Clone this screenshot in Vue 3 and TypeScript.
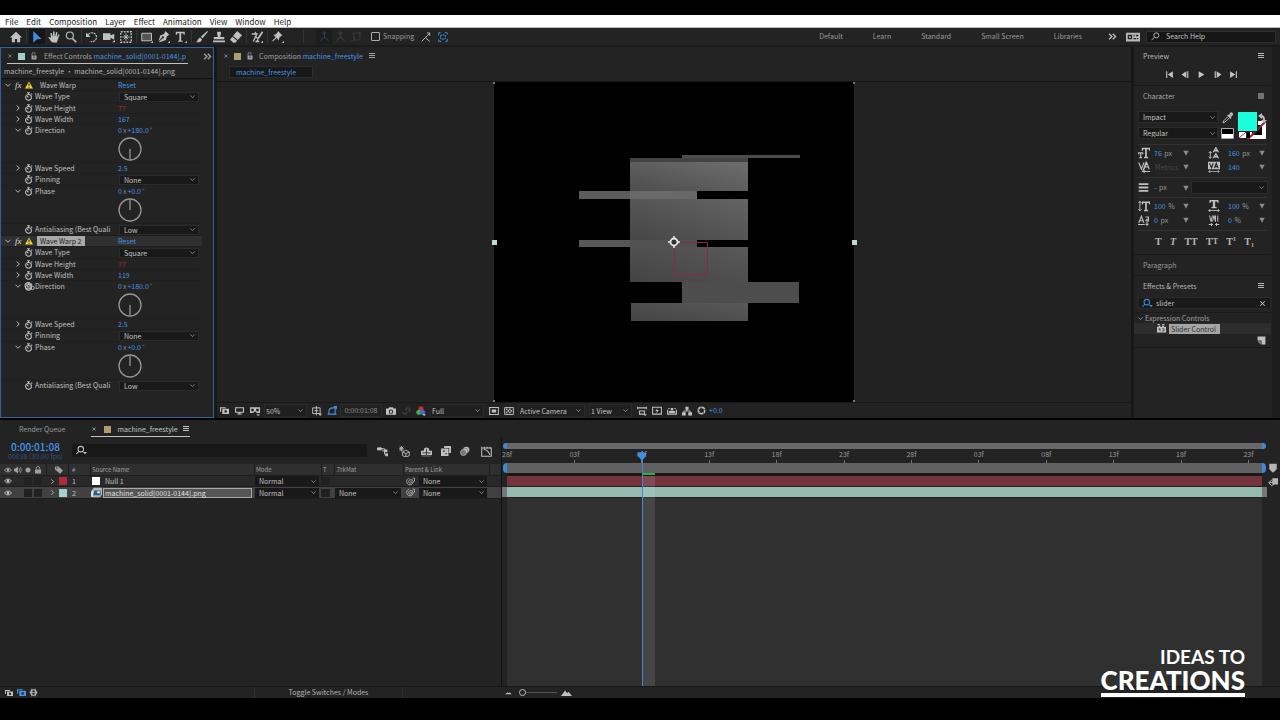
<script setup lang="ts">
import { h, type FunctionalComponent } from 'vue'

const glyphs: Record<string, string> = {
  home: '<path fill="currentColor" d="M8 1 0 8.500h2.500V15h4v-4.500h3V15h4V8.500H16z"/>',
  arrow: '<path fill="currentColor" d="M3 0 14 10.500 8 11 3 15.500z"/>',
  hand: '<path fill="currentColor" d="M5 15C3 12 1.500 10 .7 8.500c.8-1 2-.6 3 .7L4 9 3.200 3c.2-1.200 1.600-1 1.900 0l.9 4 .5-.1L6.800 1c.4-1.200 1.900-1 2 0l.1 5.900h.5L10.700 2c.5-1.100 1.800-.7 1.800.4l-.8 5.200.5.200 1.500-3.200c.7-.8 1.800-.3 1.500.8L13 12l-1.500 3.500z"/>',
  zoom: '<g fill="none" stroke="currentColor"><circle cx="6.500" cy="6" r="4.700" stroke-width="1.500"/><path d="m10 10 5 5" stroke-width="2.300"/></g>',
  rotate: '<path d="M3 5a6 6 0 1 1 3 9" fill="none" stroke="currentColor" stroke-width="1.600" stroke-dasharray="3 1"/><path fill="currentColor" d="M0 2v6h6z"/>',
  camera: '<path fill="currentColor" d="M0 3h10v3l5-2.500v8L10 9v3H0zM12 15h4v-3z"/>',
  anchor: '<rect x="1" y="1" width="14" height="14" fill="none" stroke="currentColor" stroke-width="1.800" stroke-dasharray="2.500 1.500"/><path d="M8 3v10M3 8h10M5 5l6 6M11 5l-6 6" stroke="currentColor" stroke-width="1.200"/>',
  rect: '<path d="M1 3h13v10H1z" fill="#555" stroke="currentColor" stroke-width="1.300"/><path fill="currentColor" d="M13 16h3v-3z"/>',
  pen: '<path fill="currentColor" d="m10 0 5 5-3 2-1.500 5L2 15l-.6-.6L6 10a1.500 1.500 0 1 0-1-1L.7 13.500 3 6l5-2zM13 16h3v-3z"/>',
  type: '<path fill="currentColor" d="M1 1h12v4h-1.500L11 3H8.200v9.500l2 .5v1.200H4V13l1.800-.5V3H3l-.5 2H1zM13 16h3v-3z"/>',
  brush: '<path fill="currentColor" d="M15 0 6.500 7.500l2.300 2.300L16 1zM5.500 8.500 8 11c-1 4-4 4.500-8 4 2-1 2-5 5.500-6.500z"/>',
  stamp: '<path fill="currentColor" d="M5.500 1h5v3L9.500 8H15v3H1V8h5.500l-1-4zM0 12.500h16V15H0z"/>',
  eraser: '<path fill="currentColor" d="M9.500 0 16 5.500 10.500 12 4 6.500zM3 7.500 9.500 13 7 15.500H4.500L0 11.500z"/>',
  roto: '<g fill="none" stroke="currentColor" stroke-width="1.700"><path d="M1 4h7L3 14M5 7l4 3M6 4V1"/><path d="m15.500 1-6 9" stroke-width="2.400"/><path d="M9 10c1 3-2 4-3 4h5"/></g><path fill="currentColor" d="M13 16h3v-3z"/>',
  pin: '<path fill="currentColor" d="m8 0 6 6-2 .8-2.500 2.500-.2 3.200L6 9.200 1.200 14l-1-1L5 8.200 1.700 5l3.200-.2L7.300 2zM13 16h3v-3z"/>',
  axis: '<path d="M8 1v8M8 9l-6 5M8 9l6 5M5 4l3-3 3 3" fill="none" stroke="currentColor" stroke-width="1.600"/>',
  axisBox: '<path d="M3 3h10v10H5zM1 14l4-1V9M12 1l2 2-2 2" fill="none" stroke="currentColor" stroke-width="1.500"/>',
  snapEdge: '<path d="m1 15 6-6 7 6M7 9l7-7M9.500 1.500H14V6" fill="none" stroke="currentColor" stroke-width="1.500"/>',
  snapGrid: '<path d="M1 5V1h4M11 1h4v4M15 11v4h-4M5 15H1v-4M4 6l4-2 4 2v4l-4 2-4-2z" fill="none" stroke="currentColor" stroke-width="1.700" stroke-dasharray="3 1"/>',
  more: '<path d="m2 3 5 5-5 5M8.500 3l5 5-5 5" fill="none" stroke="currentColor" stroke-width="2.300"/>',
  workspace: '<path fill="currentColor" fill-rule="evenodd" d="M0 3h16v10H0zm2 2.500v5h5v-5zm1.500 1.500h2v2h-2zM8.500 5.500V7H10V5.500zm3 0V7H14V5.500zm-3 3.500v1.500h3V9zm4 0v1.500H14V9z"/>',
  search: '<g fill="none" stroke="currentColor" stroke-width="1.600"><circle cx="9.500" cy="6" r="4.500"/><path d="M6 9.500 1 14.500"/></g>',
  searchMenu: '<g fill="none" stroke="currentColor" stroke-width="1.500"><circle cx="7" cy="6" r="4"/><path d="M4.500 9 .5 13"/></g><path fill="currentColor" d="M10 10h6l-3 3.500z"/>',
  lock: '<path fill="currentColor" fill-rule="evenodd" d="M3 7h10v8H3zm4 2v3h2V9z"/><path d="M4 7V4a3 3 0 0 1 6-.5V5" fill="none" stroke="currentColor" stroke-width="1.600"/>',
  padlock: '<path fill="currentColor" d="M2 7h12v8H2z"/><path d="M4.500 7V4.500a3.500 3.500 0 0 1 7 0V7" fill="none" stroke="currentColor" stroke-width="1.800"/>',
  menu: '<path fill="currentColor" d="M2 2h12v2H2zM2 6h12v2H2zM2 10h12v2H2z"/>',
  block: '<path fill="currentColor" opacity=".6" d="M2 2h12v12H2z"/>',
  close: '<path d="m4 4 8 8M12 4l-8 8" stroke="currentColor" stroke-width="1.800"/>',
  down: '<path d="m3 5.500 5 5 5-5" fill="none" stroke="currentColor" stroke-width="1.800"/>',
  right: '<path d="m5.500 3 5 5-5 5" fill="none" stroke="currentColor" stroke-width="2"/>',
  tri: '<path fill="currentColor" d="M1 2h14L8 15z"/>',
  watch: '<circle cx="8" cy="9.500" r="5.200" fill="none" stroke="currentColor" stroke-width="1.800"/><path d="M5.500 1.500h5M8 1.500v3M13 3l1.500 1.500M8 9.500 5.500 7" fill="none" stroke="currentColor" stroke-width="1.800"/>',
  warn: '<path fill="#f3d22b" d="M8 1 16 15H0z"/><path d="M8 5v5M8 11.500v2" stroke="#222" stroke-width="2"/>',
  whip: '<path d="M8 8c0-2 3-1 2.500 1.200C10 12 5 12 4.700 8.500 4.500 4 11.500 3 12.800 7.500 13.500 13 8 15 4.500 13.500 0 11 .5 4 5 2M12 2h3v6" fill="none" stroke="currentColor" stroke-width="1.400"/>',
  grab: '<circle cx="6" cy="7" r="4.500" fill="none" stroke="currentColor" stroke-width="1.500"/><path d="m2 3 9 9M3 13l7-9" stroke="currentColor"/><circle cx="12.500" cy="10" r="2.500" fill="none" stroke="currentColor" stroke-width="1.400"/>',
  layers: '<path fill="currentColor" d="M0 2h10v2H2v6H0z"/><path fill="currentColor" fill-rule="evenodd" d="M4 5h12v9H4zm4 2.500v4h4v-4z"/>',
  monitor: '<path fill="currentColor" fill-rule="evenodd" d="M0 2h16v10H9.500v1.500H12V15H4v-1.500h2.500V12H0zm2 2v6h12V4z"/>',
  goggles: '<path fill="currentColor" fill-rule="evenodd" d="M0 2h16v9h-5L8 8.500 5 11H0zm2 2.500v4h4v-4zm8 0v4h4v-4zM10 13h6l-3 3z"/>',
  grid: '<path d="M1 3h12v9H1zM7 0v15M4 7.500h6" fill="none" stroke="currentColor" stroke-width="1.500"/><path fill="currentColor" d="M10 12h6l-3 4z"/>',
  mask: '<path d="M3 13V8q1-5 6-5h4v10zM1 13h14M11 1h4v4" fill="none" stroke="currentColor" stroke-width="1.700"/>',
  photo: '<path fill="currentColor" fill-rule="evenodd" d="M0 4h4l1-2h6l1 2h4v10H0zm8 1.500a3.500 3.500 0 1 0 0 7 3.500 3.500 0 0 0 0-7zM8 7a2 2 0 1 1 0 4 2 2 0 0 1 0-4z"/>',
  link: '<path d="M3 9a3 3 0 0 0 5 3l2-2M7 7l2-3a3 3 0 0 1 5 3l-2 2" fill="none" stroke="currentColor" stroke-width="2"/>',
  rgb: '<circle cx="8" cy="4.500" r="4" fill="#d52c32"/><circle cx="4.500" cy="10" r="4" fill="#37b94a"/><circle cx="10.500" cy="10" r="4" fill="#4b63e0"/><path fill="#ccc" d="M10 13h6l-3 3z"/>',
  roi: '<path d="M1 2.500h14v11H1z" fill="none" stroke="currentColor" stroke-width="1.700"/><path fill="currentColor" d="M4.500 5.500h7v5h-7z"/>',
  checker: '<path d="M1 2.500h14v11H1z" fill="none" stroke="currentColor" stroke-width="1.500"/><path fill="currentColor" d="M3 4h2.500v2.500H3zm5 0h2.500v2.500H8zM5.500 6.500H8V9H5.500zm5 0H13V9h-2.500zM3 9h2.500v2.500H3zm5 0h2.500v2.500H8z"/>',
  align: '<path d="M1 3h14M1 1v4M15 1v4M4 8h8v5H4z" fill="none" stroke="currentColor" stroke-width="1.700"/><path fill="currentColor" d="M10 13h6l-3 3z"/>',
  fast: '<path d="M1 2h14v11H1z" fill="none" stroke="currentColor" stroke-width="1.700"/><path fill="currentColor" d="M9 3 5 8.500h3L7 12l4-5.500H8z"/>',
  timeline: '<path d="M1 6v7h14V6" fill="none" stroke="currentColor" stroke-width="1.800"/><path fill="currentColor" d="M3 8h10v3H3zM6 3h4v4H6zM2 3h2v2H2zm10 0h2v2h-2z"/>',
  flow: '<path d="M8 5v3M3 11V8h10v3" fill="none" stroke="currentColor" stroke-width="1.500"/><path fill="currentColor" d="M5.500 1h5v5h-5zM0 10h6v5H0zm10 0h6v5h-6z"/>',
  aperture: '<circle cx="8" cy="8" r="5.500" fill="none" stroke="currentColor" stroke-width="3"/><path d="M8 0 5 8M16 7l-8-2M12 15l-1-8M2 13l8-3M1 4l5 6" stroke="#222" stroke-width="1"/>',
  first: '<path fill="currentColor" d="M2 2h2v12H2zM14 2v12L5 8z"/>',
  prev: '<path fill="currentColor" d="M11 2h2v12h-2zM9.500 2v12L1 8z"/>',
  play: '<path fill="currentColor" d="M3 2v12l10-6z"/>',
  next: '<path fill="currentColor" d="M3 2h2v12H3zM6.500 2v12L15 8z"/>',
  last: '<path fill="currentColor" d="M12 2h2v12h-2zM2 2v12l9-6z"/>',
  fontSize: '<path fill="currentColor" d="M5 1h11v4h-1.200l-.5-2h-2.500v10l1.700.4V15H8v-1.600l1.500-.4V3H7l-.5 2H5zM0 7h7v3H6l-.4-1.500H4.300V13l1 .4V15H1.800v-1.600l1-.4V8.500H1.300L1 10H0z"/>',
  leading: '<path d="M3 6v9M1 8l2-2 2 2M1 13l2 2 2-2" fill="none" stroke="currentColor" stroke-width="1.300"/><path d="m7 7 3.500-6L14 7M8 5h5M7 15l3.500-6 3.500 6M8 13h5" fill="none" stroke="currentColor" stroke-width="1.700"/>',
  kerning: '<path d="m1 2 3.500 9L8 2M8 11l3.500-9L15 11M9 8h5M6 15 11 1M7 14h9" fill="none" stroke="currentColor" stroke-width="1.500"/><path fill="currentColor" d="M9 11.500v5L6 14z"/>',
  tracking: '<path fill="currentColor" d="M0 1h16v10H0z"/><path d="m2 3 2.700 6L7 3M8.500 9.500 11 3l2.500 6.500M9.500 7.500h3" fill="none" stroke="#222" stroke-width="1.500"/><path d="M1 14h14M3 12l-2 2 2 2M13 12l2 2-2 2" fill="none" stroke="currentColor"/>',
  stroke: '<path d="M1 3h14M1 8h14M1 13h14" stroke="currentColor" stroke-width="2.600"/>',
  vScale: '<path fill="currentColor" d="M5 2h11v4h-1.200l-.5-2h-2.500v9l1.700.4V15H8v-1.600l1.500-.4V4H7l-.5 2H5z"/><path d="M2.500 2v12M.5 4l2-2.500 2 2.500M.5 12l2 2.500 2-2.500" fill="none" stroke="currentColor" stroke-width="1.200"/>',
  hScale: '<path fill="currentColor" d="M2 0h12v4h-1.300l-.5-2H9.500v7l2 .4V11h-7V9.400l2-.4V2H3.800l-.5 2H2z"/><path d="M1 14h14M3 12l-2 2 2 2M13 12l2 2-2 2" fill="none" stroke="currentColor" stroke-width="1.200"/>',
  baseline: '<path d="m1 12 3.500-9L8 12M2 9h5M0 14h9M12 7v8M10 9l2-2 2 2M10 13l2 2 2-2M10 4h4v6" fill="none" stroke="currentColor" stroke-width="1.400"/>',
  tsume: '<path d="m2 2 2 8 2-8M6 10l2-8 2 8M10 2v8M13 2v8M1 14h5M15 14h-5M4 12l2 2-2 2M12 12l-2 2 2 2" fill="none" stroke="currentColor" stroke-width="1.300"/>',
  preset: '<path fill="currentColor" fill-rule="evenodd" d="M0 5h3V3h3v2h3V3h3v2h4v10H0zm3 3v2h2v3h1V8zm6 0v1h3v1h-2v1h2v1H9v1h4V8zM1 0h4v2H1zm8 0h4v2H9z"/>',
  page: '<path fill="currentColor" d="M1 1h14v14H8V8H1z"/><path fill="currentColor" d="M1 9.500h5.500V15z" opacity=".7"/>',
  eye: '<path d="M1 8q7-8 14 0-7 8-14 0z" fill="none" stroke="currentColor" stroke-width="1.800"/><circle cx="8" cy="8" r="2.800" fill="currentColor"/>',
  speaker: '<path fill="currentColor" d="M0 5h3l5-4v14l-5-4H0z"/><path d="M10 4q3 4 0 8M12.500 2q5 6 0 12" fill="none" stroke="currentColor" stroke-width="1.500"/>',
  dot: '<circle cx="8" cy="8" r="5" fill="currentColor"/>',
  tag: '<path fill="currentColor" fill-rule="evenodd" d="M0 1h7l9 8-6 6.500L0 7zm3.500 1.500a1.500 1.500 0 1 0 0 3 1.500 1.500 0 0 0 0-3z"/>',
  footage: '<path fill="#b7b7b7" d="M4 1h12v10l-3 4H1V5z"/><path fill="#27618e" d="M5 5h9v7H3z"/><path fill="#e0e0e0" d="M0 6h3v8H0zM9 6h4v3H9z"/>',
  network: '<path d="M1 4h6M7 4h4v8h4M7 7h8" fill="none" stroke="currentColor" stroke-width="1.400"/><path fill="currentColor" d="M0 2h5v4H0zm11 3h4v4h-4zm1 6h4v4h-4zM4 1l5 3-5 3z"/>',
  draft: '<path d="m5 9 5-3 5 3v5l-5 2-5-2zM5 9l5 2 5-2M10 11v5M0 4h7M3.500 0v8M1 1l5 6M6 1 1 7" fill="none" stroke="currentColor" stroke-width="1.300"/>',
  shy: '<path fill="currentColor" d="M4 7q0-5 4-5t4 5h4v6H0V7zm-3 7h14v1H1z"/><path d="M2 10h12M8 4v9" stroke="#222" stroke-width="1.200"/>',
  blend: '<path fill="currentColor" d="M5 0h11v11h-3V3H5z"/><path fill="currentColor" fill-rule="evenodd" d="M0 4h12v12H0zm3 3v2h3V7zm4 4v2h2v-2z"/>',
  blur: '<circle cx="10" cy="6" r="5" fill="currentColor"/><circle cx="7.500" cy="8.500" r="5.300" fill="none" stroke="#555" stroke-width="1"/><circle cx="5.500" cy="10.500" r="4.800" fill="#777" stroke="currentColor"/>',
  graph: '<path d="M1 3h14v12H1zM4 5q6 0 9 8M1 1v3M5 1v3M9 1v3M13 1v3" fill="none" stroke="currentColor" stroke-width="1.500"/>',
  marker: '<path fill="currentColor" d="M2 1h12v9l-6 5.500L2 10z"/>',
  button: '<path fill="currentColor" d="M7 2h9v10H7z"/><path d="M7 4 1 9l5 5 4-3-3-5M2 9h8" fill="none" stroke="currentColor" stroke-width="1.600"/>',
  mtnSmall: '<path fill="currentColor" d="m2 11 4-3 2 1 2-1 4 3z"/>',
  mtnBig: '<path fill="currentColor" d="m0 13 6-8 3 4 2-2 5 6z"/>',
  cog: '<circle cx="8" cy="8" r="5" fill="none" stroke="currentColor" stroke-width="1.800"/><path d="M5 1v14M11 1v14M1 8h14" stroke="currentColor" stroke-width="1.300"/>',
}

const Icon: FunctionalComponent<{ name: string; size?: number }> = (p) =>
  h('svg', { viewBox: '0 0 16 16', width: p.size ?? 11, height: p.size ?? 11, 'aria-hidden': 'true', innerHTML: glyphs[p.name] })
Icon.props = ['name', 'size']

const menus = ['File', 'Edit', 'Composition', 'Layer', 'Effect', 'Animation', 'View', 'Window', 'Help']
const tools = [['home'], ['arrow', 'hand', 'zoom'], ['rotate', 'camera', 'anchor'], ['rect', 'pen', 'type'], ['brush', 'stamp', 'eraser'], ['roto'], ['pin']]
const workspaces = ['Default', 'Learn', 'Standard', 'Small Screen', 'Libraries']

interface Prop { label: string; kind: 'select' | 'number' | 'angle'; value: string; arrow?: string; red?: boolean; cursor?: boolean }
const effect = (name: string, width: string, selected: boolean) => ({
  name,
  selected,
  props: [
    { label: 'Wave Type', kind: 'select', value: 'Square' },
    { label: 'Wave Height', kind: 'number', value: '77', arrow: 'right', red: true },
    { label: 'Wave Width', kind: 'number', value: width, arrow: 'right' },
    { label: 'Direction', kind: 'angle', value: '+180.0', arrow: 'down', cursor: selected },
    { label: 'Wave Speed', kind: 'number', value: '2.5', arrow: 'right' },
    { label: 'Pinning', kind: 'select', value: 'None' },
    { label: 'Phase', kind: 'angle', value: '+0.0', arrow: 'down' },
    { label: 'Antialiasing (Best Quali', kind: 'select', value: 'Low' },
  ] as Prop[],
})
const effects = [effect('Wave Warp', '167', false), effect('Wave Warp 2', '119', true)]

const charRows = [
  [
    { icon: 'fontSize', v: '76', u: 'px' }, { icon: 'leading', v: '160', u: 'px' },
    { icon: 'kerning', v: '', u: 'Metrics' }, { icon: 'tracking', v: '140', u: '' },
  ],
  [
    { icon: 'vScale', v: '100', u: '%' }, { icon: 'hScale', v: '100', u: '%' },
    { icon: 'baseline', v: '0', u: 'px' }, { icon: 'tsume', v: '0', u: '%' },
  ],
]

const layers = [
  { n: 1, name: 'Null 1', color: 'red', trk: false, sel: false },
  { n: 2, name: 'machine_solid[0001-0144].png', color: 'teal', trk: true, sel: true },
]

const span = 756
const ticks = ['28f', '03f', '08f', '13f', '18f', '23f', '28f', '03f', '08f', '13f', '18f', '23f'].map((label, i) => ({
  label,
  left: `${((i * 67.5) / span) * 100}%`,
}))
const playhead = `${(135 / span) * 100}%`
</script>

<template>
  <div class="app">
    <nav class="menubar"><button v-for="m in menus" :key="m">{{ m }}</button></nav>

    <header class="toolbar">
      <div v-for="(g, i) in tools" :key="i" class="tools">
        <button v-for="t in g" :key="t" :aria-label="t" :class="{ on: t === 'arrow' }"><Icon :name="t" :size="12" /></button>
      </div>
      <div class="tools axes">
        <button aria-label="Local axis" class="sunk"><Icon name="axis" /></button>
        <button aria-label="World axis"><Icon name="axis" /></button>
        <button aria-label="View axis"><Icon name="axisBox" /></button>
      </div>
      <label class="snap"><input type="checkbox" />Snapping</label>
      <div class="tools snaps">
        <button aria-label="Snap edges"><Icon name="snapEdge" :size="10" /></button>
        <button aria-label="Snap grid" class="blue"><Icon name="snapGrid" :size="10" /></button>
      </div>
      <div class="spaces">
        <button v-for="w in workspaces" :key="w">{{ w }}</button>
      </div>
      <button class="more" aria-label="More workspaces"><Icon name="more" :size="9" /></button>
      <button class="wsicon" aria-label="Workspace settings"><Icon name="workspace" :size="14" /></button>
      <div class="help"><Icon name="search" :size="9" /><input aria-label="Search Help" placeholder="Search Help" /></div>
    </header>

    <main class="panels">
      <section class="panel effects">
        <div class="tabline">
          <div class="tab under">
            <Icon name="close" :size="6" /><i class="sw pale"></i><Icon name="lock" :size="8" />
            <span class="clip">Effect Controls <b>machine_solid[0001-0144].p</b></span>
          </div>
          <button aria-label="More tabs"><Icon name="more" :size="9" /></button>
        </div>
        <p class="path">machine_freestyle • machine_solid[0001-0144].png</p>
        <div class="fxlist">
          <template v-for="e in effects" :key="e.name">
            <div class="fxhead" :class="{ sel: e.selected }">
              <Icon name="down" :size="8" /><em>fx</em><Icon name="warn" :size="8" />
              <span class="fxname">{{ e.name }}</span>
              <button class="reset">Reset</button>
            </div>
            <template v-for="p in e.props" :key="p.label">
              <div class="prop" :class="p.kind">
                <span class="arrowcell"><Icon v-if="p.arrow" :name="p.arrow" :size="8" /></span>
                <span class="watch"><Icon name="watch" :size="9" /><Icon v-if="p.cursor" class="grab" name="grab" :size="11" /></span>
                <span class="lbl">{{ p.label }}</span>
                <span v-if="p.kind === 'select'" class="pick"><select :aria-label="p.label"><option>{{ p.value }}</option></select><Icon name="down" :size="7" /></span>
                <span v-else-if="p.kind === 'number'" class="val" :class="{ red: p.red }">{{ p.value }}</span>
                <span v-else class="val">0<u>x</u>{{ p.value }}<u>°</u></span>
              </div>
              <div v-if="p.kind === 'angle'" class="dialrow">
                <svg viewBox="0 0 24 24" width="24" height="24" class="dial">
                  <circle cx="12" cy="12" r="11" /><path :d="p.value === '+0.0' ? 'M12 12V2' : 'M12 12v10'" />
                </svg>
              </div>
            </template>
          </template>
        </div>
      </section>

      <section class="panel comp">
        <div class="tabline">
          <div class="tab">
            <Icon name="close" :size="6" /><i class="sw tan"></i><Icon name="lock" :size="8" />
            <span>Composition <b>machine_freestyle</b></span><Icon name="menu" :size="8" />
          </div>
        </div>
        <div class="crumbs"><button>machine_freestyle</button></div>
        <div class="viewer">
          <svg class="stage" viewBox="490 82 368 320" width="368" height="320">
            <defs>
              <linearGradient id="g1" x1="0" y1="1" x2="1" y2="0"><stop offset="0" stop-color="#4d4d4d" /><stop offset="1" stop-color="#6e6e6e" /></linearGradient>
              <linearGradient id="g2" x1="0" y1="1" x2="1" y2="0"><stop offset="0" stop-color="#464646" /><stop offset="1" stop-color="#646464" /></linearGradient>
              <linearGradient id="g3" x1="0" y1="1" x2="1" y2="0"><stop offset="0" stop-color="#444" /><stop offset="1" stop-color="#595959" /></linearGradient>
            </defs>
            <rect x="494" y="82" width="360" height="320" fill="#000" />
            <path fill="#4c4c4c" d="M682 155h118v3H682z" />
            <path fill="#434343" d="M630 158h118v4H630z" />
            <path fill="url(#g1)" d="M630 162h118v29H630z" />
            <path fill="#5c5c5c" d="M579 191h51v8h-51z" /><path fill="#696969" d="M630 191h67v8h-67z" />
            <path fill="url(#g2)" d="M630 199h118v41H630z" />
            <path fill="#575757" d="M579 240h51v7h-51z" /><path fill="#515151" d="M630 240h67v7h-67z" />
            <path fill="url(#g3)" d="M630 247h118v35H630z" />
            <path fill="#4d4d4d" d="M682 282h117v21H682z" />
            <path fill="url(#g3)" d="M631 303h117v18H631z" />
            <path d="M674.500 242.500h33v32h-33z" fill="none" stroke="#8b2a3c" />
            <circle cx="674" cy="242" r="3.500" fill="#333" stroke="#e8e8e8" stroke-width="1.800" />
            <path d="M674 236v3M674 245v3M668 242h3M677 242h3" stroke="#e8e8e8" stroke-width="1.500" />
            <path fill="#b9d8cf" d="M492 240h5v5h-5zM852 240h5v5h-5z" />
            <path fill="#777" d="M493 82h2v2h-2zM853 82h2v2h-2zM493 400h2v2h-2zM853 400h2v2h-2z" />
          </svg>
        </div>
        <footer class="compbar">
          <button aria-label="Always preview"><Icon name="layers" :size="9" /></button>
          <button aria-label="Monitor"><Icon name="monitor" :size="9" /></button>
          <button aria-label="Draft view"><Icon name="goggles" :size="10" /></button>
          <span class="pick w44"><select aria-label="Magnification"><option>50%</option></select><Icon name="down" :size="7" /></span>
          <button aria-label="Guides"><Icon name="grid" :size="10" /></button>
          <button aria-label="Mask visibility" class="blue"><Icon name="mask" :size="10" /></button>
          <span class="time">0:00:01:08</span>
          <button aria-label="Snapshot"><Icon name="photo" :size="10" /></button>
          <button aria-label="Show snapshot" class="dim"><Icon name="link" :size="10" /></button>
          <button aria-label="Channels"><Icon name="rgb" :size="10" /></button>
          <span class="pick w54"><select aria-label="Resolution"><option>Full</option></select><Icon name="down" :size="7" /></span>
          <button aria-label="Region"><Icon name="roi" :size="10" /></button>
          <button aria-label="Transparency"><Icon name="checker" :size="10" /></button>
          <span class="pick w67"><select aria-label="View"><option>Active Camera</option></select><Icon name="down" :size="7" /></span>
          <span class="pick w44"><select aria-label="Layout"><option>1 View</option></select><Icon name="down" :size="7" /></span>
          <button aria-label="Pixel aspect"><Icon name="align" :size="10" /></button>
          <button aria-label="Fast previews"><Icon name="fast" :size="10" /></button>
          <button aria-label="Timeline"><Icon name="timeline" :size="10" /></button>
          <button aria-label="Flowchart"><Icon name="flow" :size="10" /></button>
          <button aria-label="Reset exposure"><Icon name="aperture" :size="9" /></button>
          <span class="blue">+0.0</span>
        </footer>
      </section>

      <aside class="side">
        <div class="box">
          <h2>Preview<Icon name="menu" :size="8" /></h2>
          <div class="transport">
            <button v-for="t in ['first', 'prev', 'play', 'next', 'last']" :key="t" :aria-label="t"><Icon :name="t" :size="9" /></button>
          </div>
        </div>
        <div class="box char">
          <h2>Character<Icon name="block" :size="8" /></h2>
          <div class="fontrow">
            <div class="fonts">
              <span class="pick"><select aria-label="Font family"><option>Impact</option></select><Icon name="down" :size="7" /></span>
              <span class="pick"><select aria-label="Font style"><option>Regular</option></select><Icon name="down" :size="7" /></span>
            </div>
            <svg class="swatches" viewBox="1220 110 48 31" width="48" height="31">
              <g transform="translate(1223 112)" color="#b5b5b5"><path fill="currentColor" d="M8 1c1-2 4 0 3 2L9 5l.5 1-1 1L5 3.500l1-1 1 .500z" /><path d="M6 4.500 1.500 9 1 11l2-1 4.500-4" fill="none" stroke="currentColor" /></g>
              <path fill="#000" stroke="#aaa" d="M1222.500 128.500h12v10h-12z" /><path fill="#fff" d="M1223 134h11v4h-11z" />
              <path fill="#fff" d="M1249 121h18v18h-18z" /><path fill="#000" d="M1253 125h10v10h-10z" />
              <path d="m1249 139 18-18" stroke="#9d2032" stroke-width="2" />
              <path fill="#1cffdf" stroke="#222" d="M1238.500 111.500h20v20h-20z" />
              <path fill="#fff" d="M1240 132h7v6h-7z" /><path d="m1240 138 7-6" stroke="#a33" />
              <path fill="#000" d="M1248 132h3v6h-3z" />
              <path d="M1262 116q3 0 3 4" fill="none" stroke="#bbb" stroke-width="2" /><path fill="#bbb" d="M1263 113v6l-4-3zM1262 120h6l-3 3z" />
            </svg>
          </div>
          <div class="nums">
            <div v-for="c in charRows[0]" :key="c.icon" class="num"><Icon :name="c.icon" :size="12" /><span><b>{{ c.v }}</b> <i :class="{ off: c.u === 'Metrics' }">{{ c.u }}</i></span><Icon name="tri" :size="6" /></div>
          </div>
          <div class="strokerow">
            <div class="num"><Icon name="stroke" :size="11" /><span><b>-</b> <i>px</i></span><Icon name="tri" :size="6" /></div>
            <span class="pick"><select aria-label="Stroke order"><option></option></select><Icon name="down" :size="7" /></span>
          </div>
          <div class="nums">
            <div v-for="c in charRows[1]" :key="c.icon" class="num"><Icon :name="c.icon" :size="12" /><span><b>{{ c.v }}</b> <i>{{ c.u }}</i></span><Icon name="tri" :size="6" /></div>
          </div>
          <div class="styles">
            <button><b>T</b></button><button><i>T</i></button><button>TT</button><button>T<small>T</small></button><button>T<sup>1</sup></button><button>T<sub>1</sub></button>
          </div>
        </div>
        <div class="box para"><h2>Paragraph</h2></div>
        <div class="box presets">
          <h2>Effects &amp; Presets<Icon name="menu" :size="8" /></h2>
          <div class="find"><Icon name="searchMenu" :size="11" /><input aria-label="Search presets" value="slider" /><button aria-label="Clear"><Icon name="close" :size="9" /></button></div>
          <div class="cat"><Icon name="down" :size="7" />Expression Controls</div>
          <div class="item"><Icon name="preset" :size="9" /><span>Slider Control</span></div>
          <div class="newp"><Icon name="page" :size="9" /></div>
        </div>
      </aside>
    </main>

    <section class="timeline">
      <div class="tabs">
        <button class="rq">Render Queue</button>
        <div class="tab under"><Icon name="close" :size="6" /><i class="sw tan"></i><span>machine_freestyle</span><Icon name="menu" :size="8" /></div>
      </div>
      <div class="tlmain">
        <div class="left">
          <div class="ctl">
            <div class="tc"><strong>0:00:01:08</strong><span>00038 (30.00 fps)</span></div>
            <div class="tlsearch"><Icon name="searchMenu" :size="11" /><input aria-label="Search layers" /></div>
            <div class="switches">
              <button aria-label="Mini flowchart"><Icon name="network" /></button>
              <button aria-label="Draft 3D"><Icon name="draft" /></button>
              <button aria-label="Shy"><Icon name="shy" /></button>
              <button aria-label="Frame blending"><Icon name="blend" :size="10" /></button>
              <button aria-label="Motion blur"><Icon name="blur" :size="10" /></button>
              <button aria-label="Graph editor"><Icon name="graph" /></button>
            </div>
          </div>
          <table>
            <colgroup><col class="c1" /><col class="c2" /><col class="c3" /><col class="c4" /><col class="c5" /><col class="c6" /><col class="c7" /><col class="c8" /><col /></colgroup>
            <thead>
              <tr>
                <th><div class="av"><Icon name="eye" :size="8" /><Icon name="speaker" :size="8" /><Icon name="dot" :size="8" /><Icon name="padlock" :size="8" /></div></th>
                <th><div class="mid"><Icon name="tag" :size="8" /></div></th>
                <th><span class="hash">#</span></th><th>Source Name</th><th>Mode</th><th>T</th><th>.TrkMat</th><th>Parent &amp; Link</th><th></th>
              </tr>
            </thead>
            <tbody>
              <tr v-for="l in layers" :key="l.n" :class="{ sel: l.sel }">
                <td><div class="av"><Icon name="eye" :size="8" /><i></i><i class="well"></i><i class="well"></i></div></td>
                <td><div class="mid"><Icon name="right" :size="7" /><i class="chip" :class="l.color"></i></div></td>
                <td><span class="n">{{ l.n }}</span></td>
                <td><div class="src"><i v-if="!l.sel" class="white"></i><Icon v-else name="footage" :size="11" /><span :class="{ boxed: l.sel }">{{ l.name }}</span></div></td>
                <td><span class="pick"><select aria-label="Mode"><option>Normal</option></select><Icon name="down" :size="7" /></span></td>
                <td><i class="well"></i></td>
                <td><span v-if="l.trk" class="pick"><select aria-label="Track matte"><option>None</option></select><Icon name="down" :size="7" /></span></td>
                <td><div class="parent"><Icon name="whip" :size="9" /><span class="pick"><select aria-label="Parent"><option>None</option></select><Icon name="down" :size="7" /></span></div></td>
                <td></td>
              </tr>
            </tbody>
          </table>
        </div>
        <div class="right">
          <div class="tracks">
            <div class="navbar"></div>
            <div class="ruler"><span v-for="(t, i) in ticks" :key="i" :style="{ left: t.left }">{{ t.label }}</span></div>
            <div class="work"></div>
            <div class="cache"><i :style="{ left: playhead }"></i></div>
            <div class="bar redbar"></div>
            <div class="bar tealbar"></div>
            <div class="field"></div>
            <div class="frame" :style="{ left: playhead }"></div>
            <div class="cti" :style="{ left: playhead }"><svg viewBox="0 0 8 10" width="8" height="10"><path fill="#3f8fe0" d="M0 1q2 2 4-1 2 3 4 1v4L4 10 0 5z" /></svg></div>
          </div>
          <div class="gutter"><Icon name="marker" :size="10" /><Icon name="button" :size="10" /></div>
        </div>
      </div>
      <footer class="tlfoot">
        <div class="fl">
          <button aria-label="Layer switches"><Icon name="layers" :size="8" /></button>
          <button aria-label="Transfer controls" class="blue"><Icon name="layers" :size="9" /></button>
          <button aria-label="In and out"><Icon name="cog" :size="9" /></button>
          <button class="toggle">Toggle Switches / Modes</button>
        </div>
        <div class="fr"><Icon name="mtnSmall" :size="9" /><input type="range" aria-label="Timeline zoom" min="0" max="100" value="0" /><Icon name="mtnBig" :size="11" /></div>
      </footer>
    </section>

    <div class="brand"><span>IDEAS TO</span><strong>CREATIONS</strong></div>
  </div>
</template>

<style>
html, body { margin: 0; background: #000; }
</style>

<style scoped>
* { box-sizing: border-box; }
.app { position: relative; display: flex; flex-direction: column; min-height: 100vh; padding: 15px 0 22px; background: #000; color: #c0c0c0; font: 7px/11px "Noto Sans CJK SC", "Noto Sans", sans-serif; white-space: nowrap; }
button, input, select { font: inherit; color: inherit; background: none; border: 0; padding: 0; margin: 0; outline: 0; border-radius: 0; }
button { display: flex; align-items: center; justify-content: center; }
svg { display: block; flex: none; }
b, th { font-weight: 400; }
i { font-style: normal; }
u { text-decoration: none; }
.blue, b { color: #4795e2; }
.menubar { display: flex; gap: 8px; height: 13px; padding-left: 5px; background: #fff; color: #222; font-size: 8px; border-bottom: 1px solid #bbb; }
.toolbar { display: flex; align-items: center; height: 19px; padding: 1px 4px 1px 8px; background: #232323; border-bottom: 2px solid #1a1a1a; }
.tools { display: flex; gap: 1px; margin-right: 5px; position: relative; }
.tools + .tools::before { content: ""; position: absolute; left: -3px; top: 1px; bottom: 1px; width: 1px; background: #343434; }
.tools button { width: 16px; height: 15px; }
.tools .on { background: #161616; color: #3c8fe8; }
.tools.axes { margin: 0 7px 0 25px; gap: 0; color: #3b3b3b; }
.tools.axes::before { left: -13px; }
.axes .sunk { background: #1c1d20; color: #333a48; }
.snap { display: flex; align-items: center; gap: 3px; color: #999; }
.snap input { appearance: none; width: 9px; height: 9px; border: 1px solid #aaa; border-radius: 1px; }
.tools.snaps { margin-left: 4px; }
.tools .blue { color: #3c86cf; }
.spaces { display: flex; gap: 30px; margin-left: auto; color: #9a9a9a; }
.more { width: 10px; margin-left: 25px; color: #c0c0c0; }
.wsicon { margin-left: 9px; color: #b8b8b8; }
.help { display: flex; align-items: center; gap: 6px; width: 130px; height: 12px; margin-left: 6px; padding-left: 4px; background: #161616; border: 1px solid #2e2e2e; }
.help input { width: 100%; }
.help input::placeholder { color: #c0c0c0; opacity: 1; }

.panels { display: grid; grid-template-columns: 214px minmax(0, 1fr) 146px; gap: 3px; height: 371px; background: #171717; }
.panel { display: flex; flex-direction: column; background: #232323; min-width: 0; }
.effects { border: 1px solid #33629b; }
.tabline { display: flex; align-items: center; justify-content: space-between; height: 17px; padding: 0 1px 0 6px; color: #a2a2a2; }
.comp .tabline { height: 18px; }
.tab { display: flex; align-items: center; gap: 5px; height: 15px; }
.tab.under { border-bottom: 1px solid #c2c2c2; }
.effects .tab { width: 181px; }
.effects .tab .clip { margin-left: 1px; }
.clip { flex: 1; }
.sw { width: 7px; height: 7px; }
.pale { background: #9fcfc6; }
.tan { background: #b19a74; }
.path { margin: 0; padding: 1px 3px 0; height: 14px; color: #b4b4b4; border-bottom: 1px solid #111; }
.fxlist { padding-right: 11px; }
.fxhead { display: flex; align-items: center; height: 11px; padding-left: 3px; gap: 3px; border-top: 1px solid #1d1d1d; }
.fxhead em { font: italic 9px/10px "Liberation Serif", serif; width: 7px; color: #ddd; }
.fxhead.sel { background: #303030; }
.fxname { padding: 0 3px; margin-left: 1px; line-height: 10px; }
.sel .fxname { background: #a9a9a9; color: #222; }
.reset { margin-left: auto; width: 84px; justify-content: flex-start; color: #4795e2; line-height: 10px; }
.prop { display: grid; grid-template-columns: 23px 11px 79px 5px 80px; align-items: center; height: 11px; border-top: 1px solid #1f1f1f; line-height: 10px; }
.prop.select { height: 12px; line-height: 11px; }
.arrowcell { padding-left: 13px; }
.watch { position: relative; }
.grab { position: absolute; left: 0; top: -1px; }
.prop > :last-child { grid-column: 5; }
.val { color: #4795e2; margin-left: -1px; }
.val u { color: #8a8a8a; margin: 0 1px; }
.val.red { color: #b0263c; }
.dialrow { display: flex; align-items: center; height: 27px; padding-left: 117px; padding-top: 1px; }
.dial { fill: none; stroke: #969696; stroke-width: 1.300; }

.pick { position: relative; display: flex; align-items: center; height: 10px; background: #191919; border: 1px solid #2b2b2b; }
.pick select { appearance: none; width: 100%; height: 8px; line-height: 8px; padding-left: 4px; color: #c4c4c4; }
.pick svg { position: absolute; right: 2px; pointer-events: none; color: #999; }

.crumbs { height: 17px; padding: 1px 12px 0; border-bottom: 1px solid #151515; }
.crumbs button { height: 12px; width: 84px; padding-left: 6px; justify-content: flex-start; background: #181818; border: 1px solid #2c2c2c; color: #4795e2; }
.viewer { flex: 1; display: flex; justify-content: center; min-height: 0; background: #222; }
.compbar { display: flex; align-items: center; height: 16px; border-top: 1px solid #181818; background: #222; }
.compbar button { width: 15px; height: 13px; }
.compbar .pick { border-color: #2a2a2a; background: #1f1f1f; margin: 0 2px; height: 13px; }
.compbar .pick select { padding-left: 1px; }
.w44 { width: 43px; }
.w54 { width: 54px; }
.w67 { width: 67px; }
.time { width: 42px; margin: 0 1px; text-align: center; border: 1px solid #2c2c2c; color: #8d8d8d; }
.dim { color: #444; }

.side { display: flex; flex-direction: column; background: #232323; padding-right: 9px; box-shadow: inset -8px 0 #1d1d1d; }
.box { border-bottom: 1px solid #191919; }
h2 { display: flex; justify-content: space-between; align-items: center; margin: 0; height: 18px; padding: 0 6px 0 9px; font: inherit; color: #b8b8b8; }
.transport { display: flex; justify-content: center; gap: 1px; height: 20px; padding-right: 3px; color: #c4c4c4; }
.transport button { width: 15px; height: 18px; }
.char { padding: 1px 4px 6px; }
.char h2 { padding: 0 2px 0 5px; color: #a8a8a8; }
.fontrow { display: flex; justify-content: space-between; padding: 5px 0 3px; }
.fonts { display: flex; flex-direction: column; gap: 4px; width: 81px; padding-top: 1px; }
.fonts .pick { height: 12px; }
.fonts select { border-right: 1px solid #292929; }
.nums { display: grid; grid-template-columns: 51px 1fr; border-top: 1px solid #323232; padding: 1px 2px 3px 0; column-gap: 19px; }
.num { display: grid; grid-template-columns: 16px 1fr 6px; align-items: center; height: 14px; }
.nums .num:nth-child(even) { grid-template-columns: 20px 1fr 6px; }
.num i { color: #999; margin-left: 1px; }
.num .off { color: #484848; }
.num svg:last-child { color: #8b8b8b; }
.strokerow { display: grid; grid-template-columns: 51px 1fr; gap: 2px; align-items: center; height: 20px; border-top: 1px solid #323232; }
.strokerow .pick { height: 13px; margin-right: -1px; }
.styles { display: flex; justify-content: space-between; border-top: 1px solid #323232; padding: 5px 13px 0 17px; }
.styles button { font: 700 10px/12px "Liberation Serif", serif; height: 12px; color: #b4b4b4; }
.styles b { color: inherit; font-weight: 700; }
.styles i { font-style: italic; }
.styles small { font-size: 8px; }
.styles sup, .styles sub { font-size: 6px; line-height: 6px; }
.styles sup { align-self: flex-start; }
.styles sub { align-self: flex-end; }
.para h2 { color: #9a9a9a; height: 20px; }
.presets { border: 0; }
.presets h2 { height: 20px; }
.find { display: flex; align-items: center; gap: 3px; height: 12px; margin: 1px 0 3px 4px; padding: 0 3px; background: #1a1a1a; border: 1px solid #2a2a2a; }
.find svg { color: #3c86cf; }
.find input { flex: 1; width: 40px; }
.find button svg { color: #bbb; }
.cat { display: flex; align-items: center; gap: 1px; height: 11px; padding-left: 3px; border-top: 1px solid #1b1b1b; color: #a2a2a2; }
.item { display: flex; align-items: center; gap: 3px; height: 11px; padding-left: 23px; background: #2d2d2d; }
.item span { background: #a5a5a5; color: #303030; padding: 0 4px 0 2px; line-height: 10px; }
.newp { display: flex; justify-content: flex-end; padding: 2px 5px; border-bottom: 1px solid #171717; color: #c0c0c0; }

.timeline { display: flex; flex: 1; flex-direction: column; margin-top: 2px; background: #232323; }
.tabs { display: flex; gap: 26px; height: 18px; padding: 2px 0 0 19px; }
.rq { height: 15px; color: #999; }
.tabs .tab { color: #c4c4c4; gap: 4px; }
.tabs .tab .sw { margin: 0 2px 0 3px; }
.tlmain { display: flex; flex: 1; min-height: 0; }
.left { width: 502px; border-right: 1px solid #111; }
.ctl { display: flex; height: 26px; padding-left: 8px; }
.tc { width: 64px; line-height: 9px; padding-top: 4px; }
.tc strong { display: block; padding-left: 3px; font-size: 10px; line-height: 10px; font-weight: 500; color: #4499f0; }
.tc span { color: #2c5788; }
.tlsearch { display: flex; align-items: center; width: 295px; height: 13px; margin-top: 6px; padding-left: 4px; background: #181818; }
.tlsearch input { width: 100%; }
.switches { display: flex; gap: 6px; margin: 7px 0 0 9px; height: 12px; }
.switches button { width: 13px; }
.switches button:nth-child(-n+2) { margin-right: 3px; }
.switches button:nth-child(5) { margin-right: 3px; }
table { width: 100%; table-layout: fixed; border-collapse: separate; border-spacing: 0; }
th, td { padding: 0; height: 11px; text-align: left; line-height: 10px; border-bottom: 1px solid #1e1e1e; }
th { height: 12px; background: #2f2f2f; color: #a0a0a0; font-size: 6px; padding-left: 2px; }
th:first-child { padding-left: 0; }
th + th { background: linear-gradient(#1d1d1d, #1d1d1d) 0 0 / 1px 100% no-repeat #2f2f2f; }
td { background: #292929; }
.sel td { background: #414141; }
.c1 { width: 46px; } .c2 { width: 22px; } .c3 { width: 22px; } .c4 { width: 164px; } .c5 { width: 67px; } .c6 { width: 13px; } .c7 { width: 69px; } .c8 { width: 86px; }
.av { display: flex; gap: 2px; padding-left: 4px; align-items: center; }
.av i { width: 8px; height: 8px; }
.well { display: block; width: 9px; height: 8px; background: #212121; }
.mid { display: flex; align-items: center; justify-content: center; gap: 3px; padding-left: 1px; }
.chip { width: 8px; height: 8px; }
.chip.red { background: #b02a3c; }
.chip.teal { background: #a3d2c8; }
.hash, .n { padding-left: 4px; }
.hash { padding-left: 2px; }
.src { display: flex; align-items: center; gap: 1px; padding-left: 1px; }
.white { width: 8px; height: 8px; margin: 0 3px 0 1px; background: #fff; }
.boxed { flex: 1; height: 10px; line-height: 8px; border: 1px solid #aaa; background: #555; color: #e0e0e0; padding-left: 1px; margin-right: 2px; }
.src span:not(.boxed) { padding-left: 1px; }
td .pick { border: 0; margin: 0 2px 0 1px; }
.parent { display: flex; align-items: center; padding-left: 3px; }
.parent .pick { flex: 1; margin-left: 4px; }

.right { display: flex; flex: 1; min-width: 0; }
.tracks { position: relative; display: flex; flex-direction: column; flex: 1; margin: 0 6px 0 5px; padding-top: 5px; }
.navbar, .work { position: relative; background: #686868; }
.navbar { height: 6px; }
.work { height: 10px; background: #616161; }
.navbar::before, .navbar::after, .work::before, .work::after { content: ""; position: absolute; top: 0; bottom: 0; width: 4px; background: #4189d8; }
.navbar::before, .work::before { left: -4px; border-radius: 4px 0 0 4px; }
.navbar::after, .work::after { right: -4px; border-radius: 0 4px 4px 0; }
.ruler { position: relative; height: 14px; color: #999; }
.ruler span { position: absolute; top: 0; width: 20px; margin-left: -10px; height: 14px; text-align: center; background: linear-gradient(#777, #777) 50% 100% / 1px 3px no-repeat; }
.ruler span:first-child { width: 14px; margin-left: -5px; background: none; text-align: left; }
.cache { position: relative; height: 3px; background: #181818; }
.cache i { position: absolute; top: 0; width: 13px; height: 2px; background: #34b13c; }
.bar { position: relative; height: 11px; border-bottom: 1px solid #222; }
.redbar { background: #74343d; }
.tealbar { background: #93bbb0; }
.tealbar::before, .tealbar::after { content: ""; position: absolute; top: 0; bottom: 0; width: 5px; background: #777; }
.tealbar::before { left: -5px; }
.tealbar::after { right: -5px; }
.field { flex: 1; background: #303030; }
.frame { position: absolute; top: 38px; bottom: 0; width: 13px; background: rgba(255, 255, 255, .11); }
.cti { position: absolute; top: 13px; bottom: 0; width: 1px; background: #4189d8; }
.cti svg { position: absolute; left: -4px; top: 0; }
.gutter { width: 12px; padding-top: 25px; color: #b5b5b5; }
.gutter svg + svg { margin-top: 4px; }
.tlfoot { display: flex; height: 12px; border-top: 1px solid #171717; align-items: center; }
.fl { display: flex; gap: 2px; width: 502px; padding-left: 4px; }
.fl button { width: 10px; height: 11px; }
.fl .toggle { width: 149px; margin-left: auto; margin-right: 99px; border: 1px solid #303030; border-width: 0 1px; color: #b0b0b0; }
.fr { display: flex; align-items: center; gap: 4px; padding-left: 2px; }
.fr input { appearance: none; width: 38px; height: 7px; margin-left: 2px; background: linear-gradient(#555, #555) 0 50% / 100% 1px no-repeat; }
.fr input::-webkit-slider-thumb { appearance: none; width: 7px; height: 7px; border: 1px solid #bbb; border-radius: 50%; background: #232323; }
.brand { position: absolute; right: 35px; bottom: 23px; display: flex; flex-direction: column; align-items: flex-end; color: #fff; font-family: Lato, sans-serif; font-weight: 700; border-bottom: 4px solid #fff; }
.brand span { font-size: 19px; line-height: 20px; }
.brand strong { font-size: 26px; line-height: 26px; }
</style>
